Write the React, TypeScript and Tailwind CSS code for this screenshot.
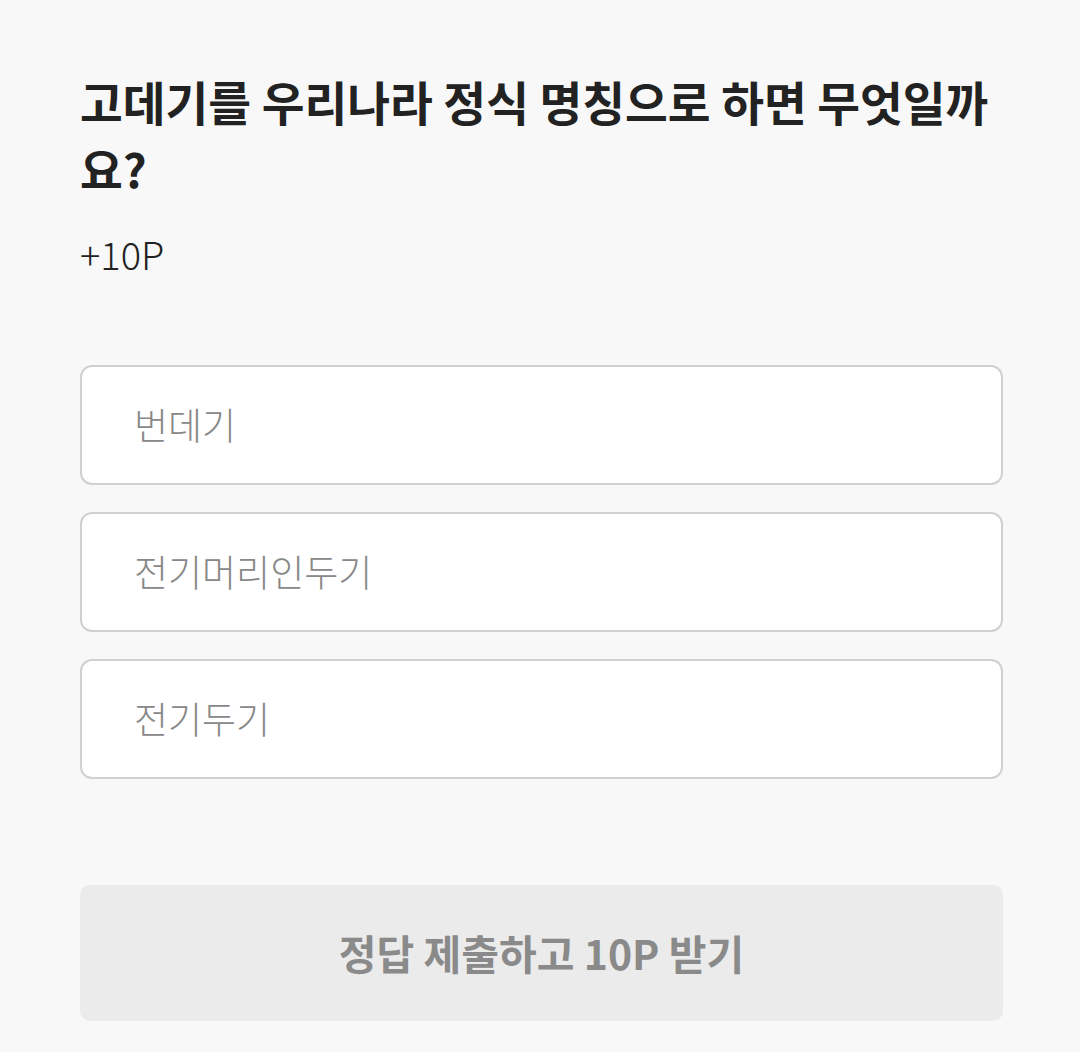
import React from "react";

export default function App() {
  const options = ["번데기", "전기머리인두기", "전기두기"];
  return (
    <div
      className="min-h-[1052px] w-[1080px] bg-[#f8f8f8] pl-[80px] pr-[77px] pt-[67px]"
      style={{ fontFamily: '"Noto Sans CJK KR", "Noto Sans", sans-serif' }}
    >
      <h1 className="text-[46.5px] font-bold leading-[67px] text-[#222222]">
        고데기를 우리나라 정식 명칭으로 하면 무엇일까요?
      </h1>
      <p className="mt-[26px] text-[38px] font-light leading-[54px] text-[#222222]">+10P</p>
      <div className="mt-[84px] flex flex-col gap-[27px]">
        {options.map((o) => (
          <div
            key={o}
            className="flex h-[120px] items-center rounded-[12px] border-2 border-[#d0d0d0] bg-white pl-[52px] text-[37px] font-light text-[#888888]"
          >
            {o}
          </div>
        ))}
      </div>
      <button className="mt-[106px] flex h-[136px] w-full items-center justify-center rounded-[10px] bg-[#ebebeb] text-[41px] font-bold text-[#8a8a8a]">
        정답 제출하고 10P 받기
      </button>
    </div>
  );
}
